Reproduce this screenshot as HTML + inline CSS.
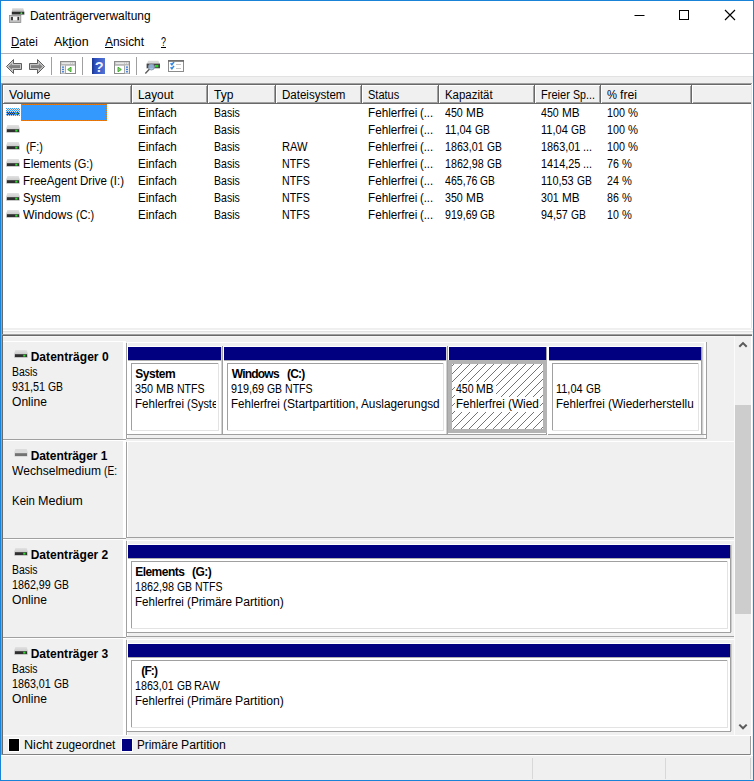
<!DOCTYPE html>
<html lang="de"><head><meta charset="utf-8"><title>Datenträgerverwaltung</title><style>
html,body{margin:0;padding:0;}
body{width:754px;height:781px;position:relative;overflow:hidden;background:#fff;font-family:"Liberation Sans",sans-serif;font-size:12px;color:#000;}
.a{position:absolute;display:block;}
.t{position:absolute;white-space:pre;line-height:14px;height:14px;font-size:12px;transform-origin:0 0;}
u{text-decoration:underline;text-underline-offset:1px;}
</style></head><body>
<div class="a" style="left:0px;top:0px;width:754px;height:781px;background:#1883d7;"></div>
<div class="a" style="left:1px;top:1px;width:752px;height:779px;background:#fff;"></div>
<div class="a" style="left:1px;top:76px;width:752px;height:704px;background:#f0f0f0;"></div>
<div class="a" style="left:1px;top:53px;width:752px;height:1px;background:#b2b2b6;"></div>
<div class="a" style="left:1px;top:76px;width:752px;height:1px;background:#e2e2e2;"></div>
<svg class="a" style="left:8px;top:7px" width="18" height="17" viewBox="0 0 18 17">
<defs><linearGradient id="tg" x1="0" y1="0" x2="0" y2="1"><stop offset="0" stop-color="#e8e8e8"/><stop offset="1" stop-color="#b0b0b0"/></linearGradient>
<linearGradient id="ug" x1="0" y1="0" x2="0" y2="1"><stop offset="0" stop-color="#d2d2d2"/><stop offset="1" stop-color="#bcbcbc"/></linearGradient></defs>
<path d="M4.300 1h10.900l1.100 3.900h-12.500z" fill="url(#tg)"/>
<rect x="3.800" y="4.800" width="12.500" height="2.900" fill="#2e2e2e"/>
<rect x="3.800" y="7.600" width="12.500" height="0.500" fill="#b8b8b8"/>
<circle cx="13.400" cy="6.300" r="1" fill="#3cf03c"/>
<rect x="1.400" y="8.400" width="11.400" height="7.200" fill="url(#ug)" stroke="#8e8e8e" stroke-width="0.800"/>
<rect x="3.200" y="9.900" width="1.700" height="3.300" fill="#1e1e1e"/>
<rect x="9.300" y="9.900" width="1.600" height="3.300" fill="#1e1e1e"/>
<rect x="4.900" y="9.900" width="4.400" height="3.300" fill="#f6f6f6"/>
</svg>
<span class="t" style="left:30.00px;top:9px;transform:scaleX(0.9928);">Datenträgerverwaltung</span>
<svg class="a" style="left:630px;top:5px" width="112" height="20" viewBox="0 0 112 20" fill="none" stroke="#000" stroke-width="1"><path d="M4.500 10.500h10"/><rect x="49.500" y="5.500" width="9" height="9"/><path d="M95 5l10 10M105 5l-10 10" stroke-width="1.150"/></svg>
<span class="t" style="left:11.00px;top:35px;transform:scaleX(0.9516);"><u>D</u>atei</span>
<span class="t" style="left:54.00px;top:35px;transform:scaleX(1.0374);">Ak<u>t</u>ion</span>
<span class="t" style="left:105.00px;top:35px;transform:scaleX(0.9908);"><u>A</u>nsicht</span>
<span class="t" style="left:161.00px;top:35px;transform:scaleX(0.7479);"><u>?</u></span>
<svg class="a" style="left:0;top:54px" width="200" height="23" viewBox="0 0 200 23">
<defs>
<linearGradient id="ag" x1="0" y1="0" x2="0" y2="1"><stop offset="0" stop-color="#b4b4b4"/><stop offset="0.550" stop-color="#7c7c7c"/><stop offset="1" stop-color="#a6a6a6"/></linearGradient>
<linearGradient id="hg" x1="0" y1="0" x2="1" y2="0"><stop offset="0" stop-color="#1f3fa6"/><stop offset="0.250" stop-color="#2c4fbc"/><stop offset="1" stop-color="#5373d6"/></linearGradient>
</defs>
<clipPath id="cl"><path d="M6.500 12.500l7-7v4h8v6h-8v4z"/></clipPath><path d="M6.500 12.500l7-7v4h8v6h-8v4z" fill="url(#ag)" stroke="#c6c6c6" stroke-width="3" clip-path="url(#cl)"/><path d="M6.500 12.500l7-7v4h8v6h-8v4z" fill="none" stroke="#5e5e5e" stroke-width="1"/>
<clipPath id="cr"><path d="M44.500 12.500l-7-7v4h-8v6h8v4z"/></clipPath><path d="M44.500 12.500l-7-7v4h-8v6h8v4z" fill="url(#ag)" stroke="#c6c6c6" stroke-width="3" clip-path="url(#cr)"/><path d="M44.500 12.500l-7-7v4h-8v6h8v4z" fill="none" stroke="#5e5e5e" stroke-width="1"/>
<rect x="51" y="3" width="1" height="18" fill="#a0a0a0"/>
<rect x="82" y="3" width="1" height="18" fill="#a0a0a0"/>
<rect x="136" y="3" width="1" height="18" fill="#a0a0a0"/>
<g>
<rect x="60.500" y="7.500" width="15" height="12" fill="#fff" stroke="#8c8c8c"/>
<rect x="61" y="8" width="14" height="2.500" fill="#c9c9c9"/>
<rect x="62" y="8.700" width="8" height="1" fill="#f4f4f4"/><rect x="71" y="8.700" width="1" height="1" fill="#f4f4f4"/><rect x="73" y="8.700" width="1" height="1" fill="#f4f4f4"/>
<rect x="61" y="10.500" width="14" height="1" fill="#8c8c8c"/>
<rect x="61" y="11.500" width="4" height="8" fill="#ececec"/>
<rect x="62" y="12.500" width="2" height="1.300" fill="#3f7fdc"/><rect x="62" y="14.800" width="2" height="1.300" fill="#3f7fdc"/><rect x="62" y="17.100" width="2" height="1.300" fill="#3f7fdc"/>
<rect x="65" y="11.500" width="1" height="8" fill="#a8a8a8"/>
<path d="M71 13.200v4.600l-3.300-2.300z" fill="#8fd47c" stroke="#36a321" stroke-width="0.900"/>
</g>
<rect x="92" y="4" width="13" height="16" fill="url(#hg)"/>
<rect x="92" y="4" width="1.500" height="16" fill="#1d3a98"/>
<text x="99.200" y="17.600" font-family="Liberation Sans, sans-serif" font-weight="bold" font-size="14.500" fill="#eef2ff" text-anchor="middle">?</text>
<g>
<rect x="114.500" y="7.500" width="15" height="12" fill="#fff" stroke="#8c8c8c"/>
<rect x="115" y="8" width="14" height="2.500" fill="#c9c9c9"/>
<rect x="116" y="8.700" width="8" height="1" fill="#f4f4f4"/><rect x="125" y="8.700" width="1" height="1" fill="#f4f4f4"/><rect x="127" y="8.700" width="1" height="1" fill="#f4f4f4"/>
<rect x="115" y="10.500" width="14" height="1" fill="#8c8c8c"/>
<rect x="125" y="11.500" width="4" height="8" fill="#ececec"/>
<rect x="126" y="12.500" width="2" height="1.300" fill="#3f7fdc"/><rect x="126" y="14.800" width="2" height="1.300" fill="#3f7fdc"/><rect x="126" y="17.100" width="2" height="1.300" fill="#3f7fdc"/>
<rect x="124" y="11.500" width="1" height="8" fill="#a8a8a8"/>
<path d="M118 13.200v4.600l3.300-2.300z" fill="#8fd47c" stroke="#36a321" stroke-width="0.900"/>
</g>
<g>
<path d="M148.200 6.800h10.200l1.300 2.900h-12.800z" fill="#d9d9d9"/>
<rect x="146.600" y="9.600" width="13.400" height="4.700" fill="#454545"/>
<rect x="146.600" y="14.200" width="13.400" height="0.700" fill="#cfcfcf"/>
<rect x="155" y="11" width="3.300" height="2.300" fill="#22d822"/>
<circle cx="151.400" cy="13" r="3" fill="#9cc0e8" fill-opacity="0.850" stroke="#8696ac" stroke-width="0.900"/>
<path d="M149.300 15.300l-4 4.200" stroke="#5c5c5c" stroke-width="1.400"/>
</g>
<g>
<rect x="168.500" y="6.500" width="15" height="11" fill="#fff" stroke="#8c8c8c"/>
<rect x="168" y="6" width="16" height="1.800" fill="#6e6e6e"/>
<path d="M170.600 9.300l1.300 1.500 2.100-2.900M170.600 13.300l1.300 1.500 2.100-2.900" stroke="#2f86e6" stroke-width="1.500" fill="none"/>
<rect x="176" y="10" width="5" height="1" fill="#c6c6c6"/><rect x="176" y="14" width="5" height="1" fill="#c6c6c6"/>
</g>
</svg>
<div class="a" style="left:1px;top:83px;width:752px;height:247px;background:#fff;"></div>
<div class="a" style="left:1px;top:83px;width:751px;height:1px;background:#a0a0a0;"></div>
<div class="a" style="left:1px;top:83px;width:1px;height:672px;background:#a0a0a0;"></div>
<div class="a" style="left:2px;top:84px;width:749px;height:1px;background:#696969;"></div>
<div class="a" style="left:2px;top:84px;width:1px;height:671px;background:#696969;"></div>
<div class="a" style="left:751px;top:84px;width:1px;height:245px;background:#e3e3e3;"></div>
<div class="a" style="left:3px;top:328px;width:749px;height:1px;background:#efefef;"></div>
<div class="a" style="left:3px;top:329px;width:750px;height:1px;background:#f0f0f0;"></div>
<div class="a" style="left:3px;top:85px;width:129px;height:19px;background:#f0f0f0;"></div>
<div class="a" style="left:3px;top:85px;width:129px;height:1px;background:#fff;"></div>
<div class="a" style="left:3px;top:85px;width:1px;height:19px;background:#fff;"></div>
<div class="a" style="left:4px;top:102px;width:128px;height:1px;background:#a0a0a0;"></div>
<div class="a" style="left:3px;top:103px;width:129px;height:1px;background:#696969;"></div>
<div class="a" style="left:130px;top:86px;width:1px;height:17px;background:#a0a0a0;"></div>
<div class="a" style="left:131px;top:85px;width:1px;height:19px;background:#696969;"></div>
<span class="t" style="left:9.00px;top:88px;transform:scaleX(1.0309);">Volume</span>
<div class="a" style="left:132px;top:85px;width:76px;height:19px;background:#f0f0f0;"></div>
<div class="a" style="left:132px;top:85px;width:76px;height:1px;background:#fff;"></div>
<div class="a" style="left:132px;top:85px;width:1px;height:19px;background:#fff;"></div>
<div class="a" style="left:133px;top:102px;width:75px;height:1px;background:#a0a0a0;"></div>
<div class="a" style="left:132px;top:103px;width:76px;height:1px;background:#696969;"></div>
<div class="a" style="left:206px;top:86px;width:1px;height:17px;background:#a0a0a0;"></div>
<div class="a" style="left:207px;top:85px;width:1px;height:19px;background:#696969;"></div>
<span class="t" style="left:138.00px;top:88px;transform:scaleX(0.9861);">Layout</span>
<div class="a" style="left:208px;top:85px;width:68px;height:19px;background:#f0f0f0;"></div>
<div class="a" style="left:208px;top:85px;width:68px;height:1px;background:#fff;"></div>
<div class="a" style="left:208px;top:85px;width:1px;height:19px;background:#fff;"></div>
<div class="a" style="left:209px;top:102px;width:67px;height:1px;background:#a0a0a0;"></div>
<div class="a" style="left:208px;top:103px;width:68px;height:1px;background:#696969;"></div>
<div class="a" style="left:274px;top:86px;width:1px;height:17px;background:#a0a0a0;"></div>
<div class="a" style="left:275px;top:85px;width:1px;height:19px;background:#696969;"></div>
<span class="t" style="left:214.00px;top:88px;">Typ</span>
<div class="a" style="left:276px;top:85px;width:86px;height:19px;background:#f0f0f0;"></div>
<div class="a" style="left:276px;top:85px;width:86px;height:1px;background:#fff;"></div>
<div class="a" style="left:276px;top:85px;width:1px;height:19px;background:#fff;"></div>
<div class="a" style="left:277px;top:102px;width:85px;height:1px;background:#a0a0a0;"></div>
<div class="a" style="left:276px;top:103px;width:86px;height:1px;background:#696969;"></div>
<div class="a" style="left:360px;top:86px;width:1px;height:17px;background:#a0a0a0;"></div>
<div class="a" style="left:361px;top:85px;width:1px;height:19px;background:#696969;"></div>
<span class="t" style="left:282.00px;top:88px;transform:scaleX(0.9615);">Dateisystem</span>
<div class="a" style="left:362px;top:85px;width:77px;height:19px;background:#f0f0f0;"></div>
<div class="a" style="left:362px;top:85px;width:77px;height:1px;background:#fff;"></div>
<div class="a" style="left:362px;top:85px;width:1px;height:19px;background:#fff;"></div>
<div class="a" style="left:363px;top:102px;width:76px;height:1px;background:#a0a0a0;"></div>
<div class="a" style="left:362px;top:103px;width:77px;height:1px;background:#696969;"></div>
<div class="a" style="left:437px;top:86px;width:1px;height:17px;background:#a0a0a0;"></div>
<div class="a" style="left:438px;top:85px;width:1px;height:19px;background:#696969;"></div>
<span class="t" style="left:368.00px;top:88px;transform:scaleX(0.9187);">Status</span>
<div class="a" style="left:439px;top:85px;width:96px;height:19px;background:#f0f0f0;"></div>
<div class="a" style="left:439px;top:85px;width:96px;height:1px;background:#fff;"></div>
<div class="a" style="left:439px;top:85px;width:1px;height:19px;background:#fff;"></div>
<div class="a" style="left:440px;top:102px;width:95px;height:1px;background:#a0a0a0;"></div>
<div class="a" style="left:439px;top:103px;width:96px;height:1px;background:#696969;"></div>
<div class="a" style="left:533px;top:86px;width:1px;height:17px;background:#a0a0a0;"></div>
<div class="a" style="left:534px;top:85px;width:1px;height:19px;background:#696969;"></div>
<span class="t" style="left:445.00px;top:88px;transform:scaleX(0.9520);">Kapazität</span>
<div class="a" style="left:535px;top:85px;width:66px;height:19px;background:#f0f0f0;"></div>
<div class="a" style="left:535px;top:85px;width:66px;height:1px;background:#fff;"></div>
<div class="a" style="left:535px;top:85px;width:1px;height:19px;background:#fff;"></div>
<div class="a" style="left:536px;top:102px;width:65px;height:1px;background:#a0a0a0;"></div>
<div class="a" style="left:535px;top:103px;width:66px;height:1px;background:#696969;"></div>
<div class="a" style="left:599px;top:86px;width:1px;height:17px;background:#a0a0a0;"></div>
<div class="a" style="left:600px;top:85px;width:1px;height:19px;background:#696969;"></div>
<span class="t" style="left:541.00px;top:88px;transform:scaleX(0.9198);">Freier </span><span class="t" style="left:572.81px;top:88px;transform:scaleX(0.8859);">Sp...</span>
<div class="a" style="left:601px;top:85px;width:91px;height:19px;background:#f0f0f0;"></div>
<div class="a" style="left:601px;top:85px;width:91px;height:1px;background:#fff;"></div>
<div class="a" style="left:601px;top:85px;width:1px;height:19px;background:#fff;"></div>
<div class="a" style="left:602px;top:102px;width:90px;height:1px;background:#a0a0a0;"></div>
<div class="a" style="left:601px;top:103px;width:91px;height:1px;background:#696969;"></div>
<div class="a" style="left:690px;top:86px;width:1px;height:17px;background:#a0a0a0;"></div>
<div class="a" style="left:691px;top:85px;width:1px;height:19px;background:#696969;"></div>
<span class="t" style="left:607.00px;top:88px;transform:scaleX(0.9369);">% </span><span class="t" style="left:620.00px;top:88px;transform:scaleX(1.0196);">frei</span>
<div class="a" style="left:692px;top:85px;width:59px;height:19px;background:#f0f0f0;"></div>
<div class="a" style="left:692px;top:85px;width:59px;height:1px;background:#fff;"></div>
<div class="a" style="left:692px;top:85px;width:1px;height:19px;background:#fff;"></div>
<div class="a" style="left:693px;top:102px;width:58px;height:1px;background:#a0a0a0;"></div>
<div class="a" style="left:692px;top:103px;width:59px;height:1px;background:#696969;"></div>
<div class="a" style="left:21px;top:104px;width:86px;height:17px;background:#3399ff;outline:1px dotted #e8780c;outline-offset:-1px;"></div>
<svg class="a" style="left:6px;top:108px" width="14" height="8" viewBox="0 0 14 8" shape-rendering="crispEdges"><defs><pattern id="dith" width="2" height="2" patternUnits="userSpaceOnUse"><rect width="1" height="1" fill="#3399ff"/><rect x="1" y="1" width="1" height="1" fill="#3399ff"/></pattern></defs><path d="M1 0h12l1 4v4h-14v-4z" fill="#e2e2e2"/><rect x="1" y="4" width="12" height="3" fill="#2f2f2f"/><rect x="9" y="4" width="2" height="3" fill="#30c030"/><rect width="14" height="8" fill="url(#dith)"/></svg>
<span class="t" style="left:138.00px;top:106px;transform:scaleX(0.9681);">Einfach</span>
<span class="t" style="left:214.00px;top:106px;transform:scaleX(0.8773);">Basis</span>
<span class="t" style="left:368.00px;top:106px;transform:scaleX(0.9747);">Fehlerfrei </span><span class="t" style="left:420.43px;top:106px;transform:scaleX(0.9362);">(...</span>
<span class="t" style="left:445.00px;top:106px;transform:scaleX(0.8884);">450 </span><span class="t" style="left:465.76px;top:106px;transform:scaleX(0.9887);">MB</span>
<span class="t" style="left:541.00px;top:106px;transform:scaleX(0.8838);">450 </span><span class="t" style="left:561.65px;top:106px;transform:scaleX(0.9835);">MB</span>
<span class="t" style="left:607.00px;top:106px;transform:scaleX(0.8971);">100 </span><span class="t" style="left:627.96px;top:106px;transform:scaleX(0.9354);">%</span>
<svg class="a" style="left:6px;top:125px" width="14" height="8" viewBox="0 0 14 8">
<defs><linearGradient id="dg1" x1="0" y1="0" x2="0" y2="1"><stop offset="0" stop-color="#e2e2e2"/><stop offset="1" stop-color="#bababa"/></linearGradient></defs>
<path d="M1.300 0h11.400l1.300 4.200v3.300h-14v-3.300z" fill="url(#dg1)"/>
<rect x="1" y="4.200" width="12" height="2.900" fill="#2f2f2f"/>
<rect x="9.300" y="4.700" width="2.200" height="1.900" fill="#30e030"/>
</svg>
<span class="t" style="left:138.00px;top:123px;transform:scaleX(0.9681);">Einfach</span>
<span class="t" style="left:214.00px;top:123px;transform:scaleX(0.8773);">Basis</span>
<span class="t" style="left:368.00px;top:123px;transform:scaleX(0.9747);">Fehlerfrei </span><span class="t" style="left:420.43px;top:123px;transform:scaleX(0.9362);">(...</span>
<span class="t" style="left:445.00px;top:123px;transform:scaleX(0.9153);">11,04 </span><span class="t" style="left:474.64px;top:123px;transform:scaleX(0.8544);">GB</span>
<span class="t" style="left:541.00px;top:123px;transform:scaleX(0.9195);">11,04 </span><span class="t" style="left:570.77px;top:123px;transform:scaleX(0.8583);">GB</span>
<span class="t" style="left:607.00px;top:123px;transform:scaleX(0.8971);">100 </span><span class="t" style="left:627.96px;top:123px;transform:scaleX(0.9354);">%</span>
<svg class="a" style="left:6px;top:142px" width="14" height="8" viewBox="0 0 14 8">
<defs><linearGradient id="dg2" x1="0" y1="0" x2="0" y2="1"><stop offset="0" stop-color="#e2e2e2"/><stop offset="1" stop-color="#bababa"/></linearGradient></defs>
<path d="M1.300 0h11.400l1.300 4.200v3.300h-14v-3.300z" fill="url(#dg2)"/>
<rect x="1" y="4.200" width="12" height="2.900" fill="#2f2f2f"/>
<rect x="9.300" y="4.700" width="2.200" height="1.900" fill="#30e030"/>
</svg>
<span class="t" style="left:26.00px;top:140px;transform:scaleX(0.9056);">(F:)</span>
<span class="t" style="left:138.00px;top:140px;transform:scaleX(0.9681);">Einfach</span>
<span class="t" style="left:214.00px;top:140px;transform:scaleX(0.8773);">Basis</span>
<span class="t" style="left:282.00px;top:140px;transform:scaleX(0.9270);">RAW</span>
<span class="t" style="left:368.00px;top:140px;transform:scaleX(0.9747);">Fehlerfrei </span><span class="t" style="left:420.43px;top:140px;transform:scaleX(0.9362);">(...</span>
<span class="t" style="left:445.00px;top:140px;transform:scaleX(0.8902);">1863,01 </span><span class="t" style="left:486.60px;top:140px;transform:scaleX(0.8566);">GB</span>
<span class="t" style="left:541.00px;top:140px;transform:scaleX(0.9062);">1863,01 </span><span class="t" style="left:583.35px;top:140px;transform:scaleX(0.9060);">...</span>
<span class="t" style="left:607.00px;top:140px;transform:scaleX(0.8971);">100 </span><span class="t" style="left:627.96px;top:140px;transform:scaleX(0.9354);">%</span>
<svg class="a" style="left:6px;top:159px" width="14" height="8" viewBox="0 0 14 8">
<defs><linearGradient id="dg3" x1="0" y1="0" x2="0" y2="1"><stop offset="0" stop-color="#e2e2e2"/><stop offset="1" stop-color="#bababa"/></linearGradient></defs>
<path d="M1.300 0h11.400l1.300 4.200v3.300h-14v-3.300z" fill="url(#dg3)"/>
<rect x="1" y="4.200" width="12" height="2.900" fill="#2f2f2f"/>
<rect x="9.300" y="4.700" width="2.200" height="1.900" fill="#30e030"/>
</svg>
<span class="t" style="left:23.00px;top:157px;transform:scaleX(0.9583);">Elements </span><span class="t" style="left:73.94px;top:157px;transform:scaleX(0.9180);">(G:)</span>
<span class="t" style="left:138.00px;top:157px;transform:scaleX(0.9681);">Einfach</span>
<span class="t" style="left:214.00px;top:157px;transform:scaleX(0.8773);">Basis</span>
<span class="t" style="left:282.00px;top:157px;transform:scaleX(0.8865);">NTFS</span>
<span class="t" style="left:368.00px;top:157px;transform:scaleX(0.9747);">Fehlerfrei </span><span class="t" style="left:420.43px;top:157px;transform:scaleX(0.9362);">(...</span>
<span class="t" style="left:445.00px;top:157px;transform:scaleX(0.8902);">1862,98 </span><span class="t" style="left:486.60px;top:157px;transform:scaleX(0.8566);">GB</span>
<span class="t" style="left:541.00px;top:157px;transform:scaleX(0.9062);">1414,25 </span><span class="t" style="left:583.35px;top:157px;transform:scaleX(0.9060);">...</span>
<span class="t" style="left:607.00px;top:157px;transform:scaleX(0.8855);">76 </span><span class="t" style="left:621.79px;top:157px;transform:scaleX(0.9237);">%</span>
<svg class="a" style="left:6px;top:176px" width="14" height="8" viewBox="0 0 14 8">
<defs><linearGradient id="dg4" x1="0" y1="0" x2="0" y2="1"><stop offset="0" stop-color="#e2e2e2"/><stop offset="1" stop-color="#bababa"/></linearGradient></defs>
<path d="M1.300 0h11.400l1.300 4.200v3.300h-14v-3.300z" fill="url(#dg4)"/>
<rect x="1" y="4.200" width="12" height="2.900" fill="#2f2f2f"/>
<rect x="9.300" y="4.700" width="2.200" height="1.900" fill="#30e030"/>
</svg>
<span class="t" style="left:23.00px;top:174px;transform:scaleX(0.9629);">FreeAgent </span><span class="t" style="left:79.97px;top:174px;transform:scaleX(0.9632);">Drive </span><span class="t" style="left:109.95px;top:174px;transform:scaleX(0.9536);">(I:)</span>
<span class="t" style="left:138.00px;top:174px;transform:scaleX(0.9681);">Einfach</span>
<span class="t" style="left:214.00px;top:174px;transform:scaleX(0.8773);">Basis</span>
<span class="t" style="left:282.00px;top:174px;transform:scaleX(0.8865);">NTFS</span>
<span class="t" style="left:368.00px;top:174px;transform:scaleX(0.9747);">Fehlerfrei </span><span class="t" style="left:420.43px;top:174px;transform:scaleX(0.9362);">(...</span>
<span class="t" style="left:445.00px;top:174px;transform:scaleX(0.8860);">465,76 </span><span class="t" style="left:480.47px;top:174px;transform:scaleX(0.8522);">GB</span>
<span class="t" style="left:541.00px;top:174px;transform:scaleX(0.9135);">110,53 </span><span class="t" style="left:576.69px;top:174px;transform:scaleX(0.8574);">GB</span>
<span class="t" style="left:607.00px;top:174px;transform:scaleX(0.8855);">24 </span><span class="t" style="left:621.79px;top:174px;transform:scaleX(0.9237);">%</span>
<svg class="a" style="left:6px;top:193px" width="14" height="8" viewBox="0 0 14 8">
<defs><linearGradient id="dg5" x1="0" y1="0" x2="0" y2="1"><stop offset="0" stop-color="#e2e2e2"/><stop offset="1" stop-color="#bababa"/></linearGradient></defs>
<path d="M1.300 0h11.400l1.300 4.200v3.300h-14v-3.300z" fill="url(#dg5)"/>
<rect x="1" y="4.200" width="12" height="2.900" fill="#2f2f2f"/>
<rect x="9.300" y="4.700" width="2.200" height="1.900" fill="#30e030"/>
</svg>
<span class="t" style="left:23.00px;top:191px;transform:scaleX(0.9437);">System</span>
<span class="t" style="left:138.00px;top:191px;transform:scaleX(0.9681);">Einfach</span>
<span class="t" style="left:214.00px;top:191px;transform:scaleX(0.8773);">Basis</span>
<span class="t" style="left:282.00px;top:191px;transform:scaleX(0.8865);">NTFS</span>
<span class="t" style="left:368.00px;top:191px;transform:scaleX(0.9747);">Fehlerfrei </span><span class="t" style="left:420.43px;top:191px;transform:scaleX(0.9362);">(...</span>
<span class="t" style="left:445.00px;top:191px;transform:scaleX(0.8884);">350 </span><span class="t" style="left:465.76px;top:191px;transform:scaleX(0.9887);">MB</span>
<span class="t" style="left:541.00px;top:191px;transform:scaleX(0.8838);">301 </span><span class="t" style="left:561.65px;top:191px;transform:scaleX(0.9835);">MB</span>
<span class="t" style="left:607.00px;top:191px;transform:scaleX(0.8855);">86 </span><span class="t" style="left:621.79px;top:191px;transform:scaleX(0.9237);">%</span>
<svg class="a" style="left:6px;top:210px" width="14" height="8" viewBox="0 0 14 8">
<defs><linearGradient id="dg6" x1="0" y1="0" x2="0" y2="1"><stop offset="0" stop-color="#e2e2e2"/><stop offset="1" stop-color="#bababa"/></linearGradient></defs>
<path d="M1.300 0h11.400l1.300 4.200v3.300h-14v-3.300z" fill="url(#dg6)"/>
<rect x="1" y="4.200" width="12" height="2.900" fill="#2f2f2f"/>
<rect x="9.300" y="4.700" width="2.200" height="1.900" fill="#30e030"/>
</svg>
<span class="t" style="left:23.00px;top:208px;transform:scaleX(1.0169);">Windows </span><span class="t" style="left:75.54px;top:208px;transform:scaleX(0.9094);">(C:)</span>
<span class="t" style="left:138.00px;top:208px;transform:scaleX(0.9681);">Einfach</span>
<span class="t" style="left:214.00px;top:208px;transform:scaleX(0.8773);">Basis</span>
<span class="t" style="left:282.00px;top:208px;transform:scaleX(0.8865);">NTFS</span>
<span class="t" style="left:368.00px;top:208px;transform:scaleX(0.9747);">Fehlerfrei </span><span class="t" style="left:420.43px;top:208px;transform:scaleX(0.9362);">(...</span>
<span class="t" style="left:445.00px;top:208px;transform:scaleX(0.8860);">919,69 </span><span class="t" style="left:480.47px;top:208px;transform:scaleX(0.8522);">GB</span>
<span class="t" style="left:541.00px;top:208px;transform:scaleX(0.8922);">94,57 </span><span class="t" style="left:570.77px;top:208px;transform:scaleX(0.8583);">GB</span>
<span class="t" style="left:607.00px;top:208px;transform:scaleX(0.8855);">10 </span><span class="t" style="left:621.79px;top:208px;transform:scaleX(0.9237);">%</span>
<div class="a" style="left:3px;top:330px;width:750px;height:1px;background:#fff;"></div>
<div class="a" style="left:3px;top:331px;width:750px;height:1px;background:#e3e3e3;"></div>
<div class="a" style="left:3px;top:332px;width:750px;height:1px;background:#f0f0f0;"></div>
<div class="a" style="left:3px;top:333px;width:750px;height:1px;background:#f5f5f5;"></div>
<div class="a" style="left:3px;top:336px;width:748px;height:1px;background:#f8f8f8;"></div>
<div class="a" style="left:1px;top:334px;width:751px;height:1px;background:#a0a0a0;"></div>
<div class="a" style="left:2px;top:335px;width:750px;height:1px;background:#696969;"></div>
<div class="a" style="left:1px;top:334px;width:1px;height:421px;background:#a0a0a0;"></div>
<div class="a" style="left:2px;top:335px;width:1px;height:420px;background:#696969;"></div>
<div class="a" style="left:751px;top:336px;width:1px;height:419px;background:#fff;"></div>
<div class="a" style="left:2px;top:754px;width:749px;height:1px;background:#828282;"></div>
<div class="a" style="left:1px;top:755px;width:752px;height:1px;background:#fff;"></div>
<div class="a" style="left:735px;top:336px;width:16px;height:399px;background:#f0f0f0;"></div>
<div class="a" style="left:735px;top:405px;width:16px;height:209px;background:#cdcdcd;"></div>
<svg class="a" style="left:735px;top:336px" width="16" height="399" viewBox="0 0 16 399" fill="none" stroke="#5a5a5a" stroke-width="2"><path d="M4.300 10.800l3.700-3.700 3.700 3.700"/><path d="M4.300 388.600l3.700 3.700 3.700-3.700"/></svg>
<div class="a" style="left:734px;top:336px;width:1px;height:399px;background:#fbfbfb;"></div>
<div class="a" style="left:3px;top:341px;width:123px;height:1px;background:#fff;"></div>
<div class="a" style="left:123px;top:341px;width:3px;height:98px;background:#fff;"></div>
<div class="a" style="left:3px;top:439px;width:123px;height:1px;background:#a0a0a0;"></div>
<svg class="a" style="left:14px;top:350px" width="14" height="8" viewBox="0 0 14 8">
<defs><linearGradient id="dg7" x1="0" y1="0" x2="0" y2="1"><stop offset="0" stop-color="#e2e2e2"/><stop offset="1" stop-color="#bababa"/></linearGradient></defs>
<path d="M1.300 0h11.400l1.300 4.200v3.300h-14v-3.300z" fill="url(#dg7)"/>
<rect x="1" y="4.200" width="12" height="2.900" fill="#2f2f2f"/>
<rect x="9.300" y="4.700" width="2.200" height="1.900" fill="#30e030"/>
</svg>
<span class="t" style="left:30.65px;top:350px;letter-spacing:0.055px;word-spacing:-0.110px;font-weight:bold;">Datenträger 0</span>
<div class="a" style="left:0px;top:363px;width:118px;height:60px;overflow:hidden">
<span class="t" style="left:12.00px;top:2px;transform:scaleX(0.8704);">Basis</span>
<span class="t" style="left:12.00px;top:17px;transform:scaleX(0.9002);">931,51 </span><span class="t" style="left:48.04px;top:17px;transform:scaleX(0.8659);">GB</span>
<span class="t" style="left:12.00px;top:32px;transform:scaleX(1.0052);">Online</span>
</div>
<div class="a" style="left:126px;top:343px;width:1px;height:96px;background:#a0a0a0;"></div>
<div class="a" style="left:127px;top:343px;width:1px;height:96px;background:#fff;"></div>
<div class="a" style="left:127px;top:342px;width:579px;height:1px;background:#fff;"></div>
<div class="a" style="left:704px;top:343px;width:2px;height:95px;background:#fff;"></div>
<div class="a" style="left:127px;top:434px;width:579px;height:1px;background:#a0a0a0;"></div>
<div class="a" style="left:706px;top:342px;width:1px;height:97px;background:#a0a0a0;"></div>
<div class="a" style="left:127px;top:438px;width:580px;height:1px;background:#a0a0a0;"></div>
<div class="a" style="left:128px;top:346px;width:94px;height:1px;background:#fff;"></div>
<div class="a" style="left:128px;top:347px;width:93px;height:13px;background:#000080;"></div>
<div class="a" style="left:221px;top:347px;width:1px;height:88px;background:#d2d2d2;"></div>
<div class="a" style="left:127px;top:434px;width:95px;height:1px;background:#a0a0a0;"></div>
<div class="a" style="left:222px;top:346px;width:1px;height:89px;background:#a2a2a2;"></div>
<div class="a" style="left:223px;top:346px;width:1px;height:89px;background:#fff;"></div>
<div class="a" style="left:128px;top:360px;width:93px;height:74px;background:#fff;"></div>
<div class="a" style="left:128px;top:360px;width:93px;height:1px;background:#b0b0b0;"></div>
<div class="a" style="left:131px;top:363px;width:87px;height:1px;background:#a0a0a0;"></div>
<div class="a" style="left:131px;top:363px;width:1px;height:67px;background:#a0a0a0;"></div>
<div class="a" style="left:131px;top:430px;width:88px;height:1px;background:#e3e3e3;"></div>
<div class="a" style="left:218px;top:363px;width:1px;height:68px;background:#e3e3e3;"></div>
<div class="a" style="left:134px;top:363px;width:82px;height:68px;overflow:hidden">
<span class="t" style="left:1.22px;top:4px;letter-spacing:-0.443px;font-weight:bold;">System</span>
<span class="t" style="left:1.00px;top:19px;transform:scaleX(0.9010);">350 </span><span class="t" style="left:22.06px;top:19px;transform:scaleX(1.0026);">MB </span><span class="t" style="left:43.11px;top:19px;transform:scaleX(0.8797);">NTFS</span>
<span class="t" style="left:1.00px;top:34px;transform:scaleX(0.9667);">Fehlerfrei </span><span class="t" style="left:53.00px;top:34px;transform:scaleX(0.9113);">(Syste</span>
</div>
<div class="a" style="left:224px;top:346px;width:223px;height:1px;background:#fff;"></div>
<div class="a" style="left:224px;top:347px;width:222px;height:13px;background:#000080;"></div>
<div class="a" style="left:446px;top:347px;width:1px;height:88px;background:#d2d2d2;"></div>
<div class="a" style="left:223px;top:434px;width:224px;height:1px;background:#a0a0a0;"></div>
<div class="a" style="left:447px;top:346px;width:1px;height:89px;background:#a2a2a2;"></div>
<div class="a" style="left:448px;top:346px;width:1px;height:89px;background:#fff;"></div>
<div class="a" style="left:224px;top:360px;width:222px;height:74px;background:#fff;"></div>
<div class="a" style="left:224px;top:360px;width:222px;height:1px;background:#b0b0b0;"></div>
<div class="a" style="left:227px;top:363px;width:216px;height:1px;background:#a0a0a0;"></div>
<div class="a" style="left:227px;top:363px;width:1px;height:67px;background:#a0a0a0;"></div>
<div class="a" style="left:227px;top:430px;width:217px;height:1px;background:#e3e3e3;"></div>
<div class="a" style="left:443px;top:363px;width:1px;height:68px;background:#e3e3e3;"></div>
<div class="a" style="left:230px;top:363px;width:211px;height:68px;overflow:hidden">
<span class="t" style="left:1.85px;top:4px;letter-spacing:-0.805px;word-spacing:1.610px;font-weight:bold;">Windows  (C:)</span>
<span class="t" style="left:1.00px;top:19px;transform:scaleX(0.9022);">919,69 </span><span class="t" style="left:37.13px;top:19px;transform:scaleX(0.8679);">GB </span><span class="t" style="left:55.19px;top:19px;transform:scaleX(0.8804);">NTFS</span>
<span class="t" style="left:1.00px;top:34px;transform:scaleX(0.9624);">Fehlerfrei </span><span class="t" style="left:52.77px;top:34px;transform:scaleX(1.0038);">(Startpartition, </span><span class="t" style="left:131.42px;top:34px;transform:scaleX(0.9824);">Auslagerungsd</span>
</div>
<div class="a" style="left:449px;top:346px;width:98px;height:1px;background:#fff;"></div>
<div class="a" style="left:449px;top:347px;width:97px;height:13px;background:#000080;"></div>
<div class="a" style="left:546px;top:347px;width:1px;height:88px;background:#a0a0a0;"></div>
<div class="a" style="left:448px;top:434px;width:99px;height:1px;background:#a0a0a0;"></div>
<div class="a" style="left:547px;top:346px;width:2px;height:89px;background:#fff;"></div>
<div class="a" style="left:449px;top:360px;width:97px;height:74px;background:#fff;"></div>
<div class="a" style="left:449px;top:360px;width:97px;height:1px;background:#b0b0b0;"></div>
<div class="a" style="left:448px;top:360px;width:99px;height:73px;background:#b4b4b4;"></div>
<svg class="a" style="left:452px;top:364px" width="91" height="65" viewBox="0 0 91 65" shape-rendering="crispEdges"><defs><pattern id="hp" width="8" height="8" patternUnits="userSpaceOnUse" fill="#747474"><rect x="0" y="1" width="1" height="1"/><rect x="1" y="0" width="1" height="1"/><rect x="2" y="7" width="1" height="1"/><rect x="3" y="6" width="1" height="1"/><rect x="4" y="5" width="1" height="1"/><rect x="5" y="4" width="1" height="1"/><rect x="6" y="3" width="1" height="1"/><rect x="7" y="2" width="1" height="1"/></pattern></defs><rect width="91" height="65" fill="#fff"/><rect width="91" height="65" fill="url(#hp)"/></svg>
<div class="a" style="left:455px;top:363px;width:86px;height:68px;overflow:hidden">
<div class="a" style="left:-1px;top:19px;width:42px;height:15px;background:#fff;"></div>
<span class="t" style="left:1.00px;top:19px;transform:scaleX(0.8768);">450 </span><span class="t" style="left:21.49px;top:19px;transform:scaleX(0.9757);">MB</span>
<div class="a" style="left:0px;top:34px;width:85px;height:15px;background:#fff;"></div>
<span class="t" style="left:1.00px;top:34px;transform:scaleX(0.9640);">Fehlerfrei </span><span class="t" style="left:52.86px;top:34px;transform:scaleX(0.9863);">(Wied</span>
</div>
<div class="a" style="left:549px;top:346px;width:153px;height:1px;background:#fff;"></div>
<div class="a" style="left:549px;top:347px;width:152px;height:13px;background:#000080;"></div>
<div class="a" style="left:701px;top:347px;width:1px;height:88px;background:#a0a0a0;"></div>
<div class="a" style="left:548px;top:434px;width:154px;height:1px;background:#a0a0a0;"></div>
<div class="a" style="left:702px;top:347px;width:1px;height:87px;background:#cccccc;"></div>
<div class="a" style="left:549px;top:360px;width:152px;height:74px;background:#fff;"></div>
<div class="a" style="left:549px;top:360px;width:152px;height:1px;background:#b0b0b0;"></div>
<div class="a" style="left:552px;top:363px;width:146px;height:1px;background:#a0a0a0;"></div>
<div class="a" style="left:552px;top:363px;width:1px;height:67px;background:#a0a0a0;"></div>
<div class="a" style="left:552px;top:430px;width:147px;height:1px;background:#e3e3e3;"></div>
<div class="a" style="left:698px;top:363px;width:1px;height:68px;background:#e3e3e3;"></div>
<div class="a" style="left:555px;top:363px;width:141px;height:68px;overflow:hidden">
<span class="t" style="left:1.00px;top:19px;transform:scaleX(0.9112);">11,04 </span><span class="t" style="left:30.50px;top:19px;transform:scaleX(0.8505);">GB</span>
<span class="t" style="left:1.00px;top:34px;transform:scaleX(0.9633);">Fehlerfrei </span><span class="t" style="left:52.82px;top:34px;transform:scaleX(0.9808);">(Wiederherstellu</span>
</div>
<div class="a" style="left:3px;top:440px;width:123px;height:1px;background:#fff;"></div>
<div class="a" style="left:123px;top:440px;width:3px;height:98px;background:#fff;"></div>
<div class="a" style="left:3px;top:538px;width:123px;height:1px;background:#a0a0a0;"></div>
<svg class="a" style="left:14px;top:449px" width="14" height="8" viewBox="0 0 14 8">
<path d="M1.300 0h11.400l1.300 4.200v3.300h-14v-3.300z" fill="#dcdcdc"/>
<rect x="1" y="4.200" width="12" height="2.900" fill="#727272"/>
</svg>
<span class="t" style="left:30.65px;top:449px;letter-spacing:-0.057px;word-spacing:0.114px;font-weight:bold;">Datenträger 1</span>
<div class="a" style="left:0px;top:462px;width:118px;height:60px;overflow:hidden">
<span class="t" style="left:12.00px;top:2px;transform:scaleX(1.0058);">Wechselmedium </span><span class="t" style="left:104.00px;top:2px;transform:scaleX(0.8473);">(E:</span>
<span class="t" style="left:12.00px;top:32px;transform:scaleX(0.9533);">Kein </span><span class="t" style="left:37.90px;top:32px;transform:scaleX(1.0500);">Medium</span>
</div>
<div class="a" style="left:126px;top:442px;width:1px;height:96px;background:#a0a0a0;"></div>
<div class="a" style="left:127px;top:442px;width:1px;height:96px;background:#fff;"></div>
<div class="a" style="left:127px;top:441px;width:607px;height:1px;background:#fff;"></div>
<div class="a" style="left:127px;top:537px;width:607px;height:1px;background:#a0a0a0;"></div>
<div class="a" style="left:3px;top:539px;width:123px;height:1px;background:#fff;"></div>
<div class="a" style="left:123px;top:539px;width:3px;height:98px;background:#fff;"></div>
<div class="a" style="left:3px;top:637px;width:123px;height:1px;background:#a0a0a0;"></div>
<svg class="a" style="left:14px;top:548px" width="14" height="8" viewBox="0 0 14 8">
<defs><linearGradient id="dg8" x1="0" y1="0" x2="0" y2="1"><stop offset="0" stop-color="#e2e2e2"/><stop offset="1" stop-color="#bababa"/></linearGradient></defs>
<path d="M1.300 0h11.400l1.300 4.200v3.300h-14v-3.300z" fill="url(#dg8)"/>
<rect x="1" y="4.200" width="12" height="2.900" fill="#2f2f2f"/>
<rect x="9.300" y="4.700" width="2.200" height="1.900" fill="#30e030"/>
</svg>
<span class="t" style="left:30.65px;top:548px;letter-spacing:0.025px;word-spacing:-0.050px;font-weight:bold;">Datenträger 2</span>
<div class="a" style="left:0px;top:561px;width:118px;height:60px;overflow:hidden">
<span class="t" style="left:12.00px;top:2px;transform:scaleX(0.8704);">Basis</span>
<span class="t" style="left:12.00px;top:17px;transform:scaleX(0.8934);">1862,99 </span><span class="t" style="left:53.75px;top:17px;transform:scaleX(0.8597);">GB</span>
<span class="t" style="left:12.00px;top:32px;transform:scaleX(1.0052);">Online</span>
</div>
<div class="a" style="left:126px;top:541px;width:1px;height:96px;background:#a0a0a0;"></div>
<div class="a" style="left:127px;top:541px;width:1px;height:96px;background:#fff;"></div>
<div class="a" style="left:127px;top:540px;width:607px;height:1px;background:#fff;"></div>
<div class="a" style="left:127px;top:636px;width:607px;height:1px;background:#a0a0a0;"></div>
<div class="a" style="left:128px;top:544px;width:603px;height:1px;background:#fff;"></div>
<div class="a" style="left:128px;top:545px;width:602px;height:13px;background:#000080;"></div>
<div class="a" style="left:730px;top:545px;width:1px;height:88px;background:#a0a0a0;"></div>
<div class="a" style="left:127px;top:632px;width:604px;height:1px;background:#a0a0a0;"></div>
<div class="a" style="left:731px;top:545px;width:1px;height:87px;background:#cccccc;"></div>
<div class="a" style="left:128px;top:558px;width:602px;height:74px;background:#fff;"></div>
<div class="a" style="left:128px;top:558px;width:602px;height:1px;background:#b0b0b0;"></div>
<div class="a" style="left:131px;top:561px;width:596px;height:1px;background:#a0a0a0;"></div>
<div class="a" style="left:131px;top:561px;width:1px;height:67px;background:#a0a0a0;"></div>
<div class="a" style="left:131px;top:628px;width:597px;height:1px;background:#e3e3e3;"></div>
<div class="a" style="left:727px;top:561px;width:1px;height:68px;background:#e3e3e3;"></div>
<div class="a" style="left:134px;top:561px;width:591px;height:68px;overflow:hidden">
<span class="t" style="left:1.15px;top:4px;letter-spacing:-0.517px;word-spacing:1.034px;font-weight:bold;">Elements  (G:)</span>
<span class="t" style="left:1.00px;top:19px;transform:scaleX(0.8997);">1862,98 </span><span class="t" style="left:43.04px;top:19px;transform:scaleX(0.8657);">GB </span><span class="t" style="left:61.06px;top:19px;transform:scaleX(0.8782);">NTFS</span>
<span class="t" style="left:1.00px;top:34px;transform:scaleX(0.9649);">Fehlerfrei </span><span class="t" style="left:52.90px;top:34px;transform:scaleX(0.9761);">(Primäre </span><span class="t" style="left:100.82px;top:34px;transform:scaleX(1.0183);">Partition)</span>
</div>
<div class="a" style="left:3px;top:638px;width:123px;height:1px;background:#fff;"></div>
<div class="a" style="left:123px;top:638px;width:3px;height:98px;background:#fff;"></div>
<div class="a" style="left:3px;top:736px;width:123px;height:1px;background:#a0a0a0;"></div>
<svg class="a" style="left:14px;top:647px" width="14" height="8" viewBox="0 0 14 8">
<defs><linearGradient id="dg9" x1="0" y1="0" x2="0" y2="1"><stop offset="0" stop-color="#e2e2e2"/><stop offset="1" stop-color="#bababa"/></linearGradient></defs>
<path d="M1.300 0h11.400l1.300 4.200v3.300h-14v-3.300z" fill="url(#dg9)"/>
<rect x="1" y="4.200" width="12" height="2.900" fill="#2f2f2f"/>
<rect x="9.300" y="4.700" width="2.200" height="1.900" fill="#30e030"/>
</svg>
<span class="t" style="left:30.65px;top:647px;letter-spacing:0.025px;word-spacing:-0.050px;font-weight:bold;">Datenträger 3</span>
<div class="a" style="left:0px;top:660px;width:118px;height:60px;overflow:hidden">
<span class="t" style="left:12.00px;top:2px;transform:scaleX(0.8704);">Basis</span>
<span class="t" style="left:12.00px;top:17px;transform:scaleX(0.8934);">1863,01 </span><span class="t" style="left:53.75px;top:17px;transform:scaleX(0.8597);">GB</span>
<span class="t" style="left:12.00px;top:32px;transform:scaleX(1.0052);">Online</span>
</div>
<div class="a" style="left:126px;top:640px;width:1px;height:96px;background:#a0a0a0;"></div>
<div class="a" style="left:127px;top:640px;width:1px;height:96px;background:#fff;"></div>
<div class="a" style="left:127px;top:639px;width:607px;height:1px;background:#fff;"></div>
<div class="a" style="left:127px;top:735px;width:607px;height:1px;background:#a0a0a0;"></div>
<div class="a" style="left:128px;top:643px;width:603px;height:1px;background:#fff;"></div>
<div class="a" style="left:128px;top:644px;width:602px;height:13px;background:#000080;"></div>
<div class="a" style="left:730px;top:644px;width:1px;height:88px;background:#a0a0a0;"></div>
<div class="a" style="left:127px;top:731px;width:604px;height:1px;background:#a0a0a0;"></div>
<div class="a" style="left:731px;top:644px;width:1px;height:87px;background:#cccccc;"></div>
<div class="a" style="left:128px;top:657px;width:602px;height:74px;background:#fff;"></div>
<div class="a" style="left:128px;top:657px;width:602px;height:1px;background:#b0b0b0;"></div>
<div class="a" style="left:131px;top:660px;width:596px;height:1px;background:#a0a0a0;"></div>
<div class="a" style="left:131px;top:660px;width:1px;height:67px;background:#a0a0a0;"></div>
<div class="a" style="left:131px;top:727px;width:597px;height:1px;background:#e3e3e3;"></div>
<div class="a" style="left:727px;top:660px;width:1px;height:68px;background:#e3e3e3;"></div>
<div class="a" style="left:134px;top:660px;width:591px;height:68px;overflow:hidden">
<span class="t" style="left:7.30px;top:4px;letter-spacing:-0.902px;font-weight:bold;">(F:)</span>
<span class="t" style="left:1.00px;top:19px;transform:scaleX(0.8910);">1863,01 </span><span class="t" style="left:42.63px;top:19px;transform:scaleX(0.8573);">GB </span><span class="t" style="left:60.48px;top:19px;transform:scaleX(0.9351);">RAW</span>
<span class="t" style="left:1.00px;top:34px;transform:scaleX(0.9649);">Fehlerfrei </span><span class="t" style="left:52.90px;top:34px;transform:scaleX(0.9761);">(Primäre </span><span class="t" style="left:100.82px;top:34px;transform:scaleX(1.0183);">Partition)</span>
</div>
<div class="a" style="left:3px;top:735px;width:748px;height:19px;background:#f0f0f0;"></div>
<div class="a" style="left:3px;top:735px;width:748px;height:1px;background:#fff;"></div>
<div class="a" style="left:750px;top:736px;width:1px;height:19px;background:#a0a0a0;"></div>
<div class="a" style="left:8px;top:738px;width:12px;height:14px;background:#fff;"></div>
<div class="a" style="left:9px;top:739px;width:10px;height:12px;background:#000;"></div>
<span class="t" style="left:24.00px;top:738px;transform:scaleX(1.0484);">Nicht </span><span class="t" style="left:55.63px;top:738px;transform:scaleX(0.9878);">zugeordnet</span>
<div class="a" style="left:121px;top:738px;width:12px;height:14px;background:#fff;"></div>
<div class="a" style="left:122px;top:739px;width:10px;height:12px;background:#000080;"></div>
<span class="t" style="left:137.00px;top:738px;transform:scaleX(0.9735);">Primäre </span><span class="t" style="left:180.89px;top:738px;transform:scaleX(1.0196);">Partition</span>
<div class="a" style="left:1px;top:756px;width:752px;height:24px;background:#f0f0f0;"></div>
<div class="a" style="left:532px;top:758px;width:1px;height:21px;background:#d8d8d8;"></div>
<div class="a" style="left:665px;top:758px;width:1px;height:21px;background:#d8d8d8;"></div>
<div class="a" style="left:750px;top:758px;width:1px;height:21px;background:#d0d0d0;"></div>
</body></html>
